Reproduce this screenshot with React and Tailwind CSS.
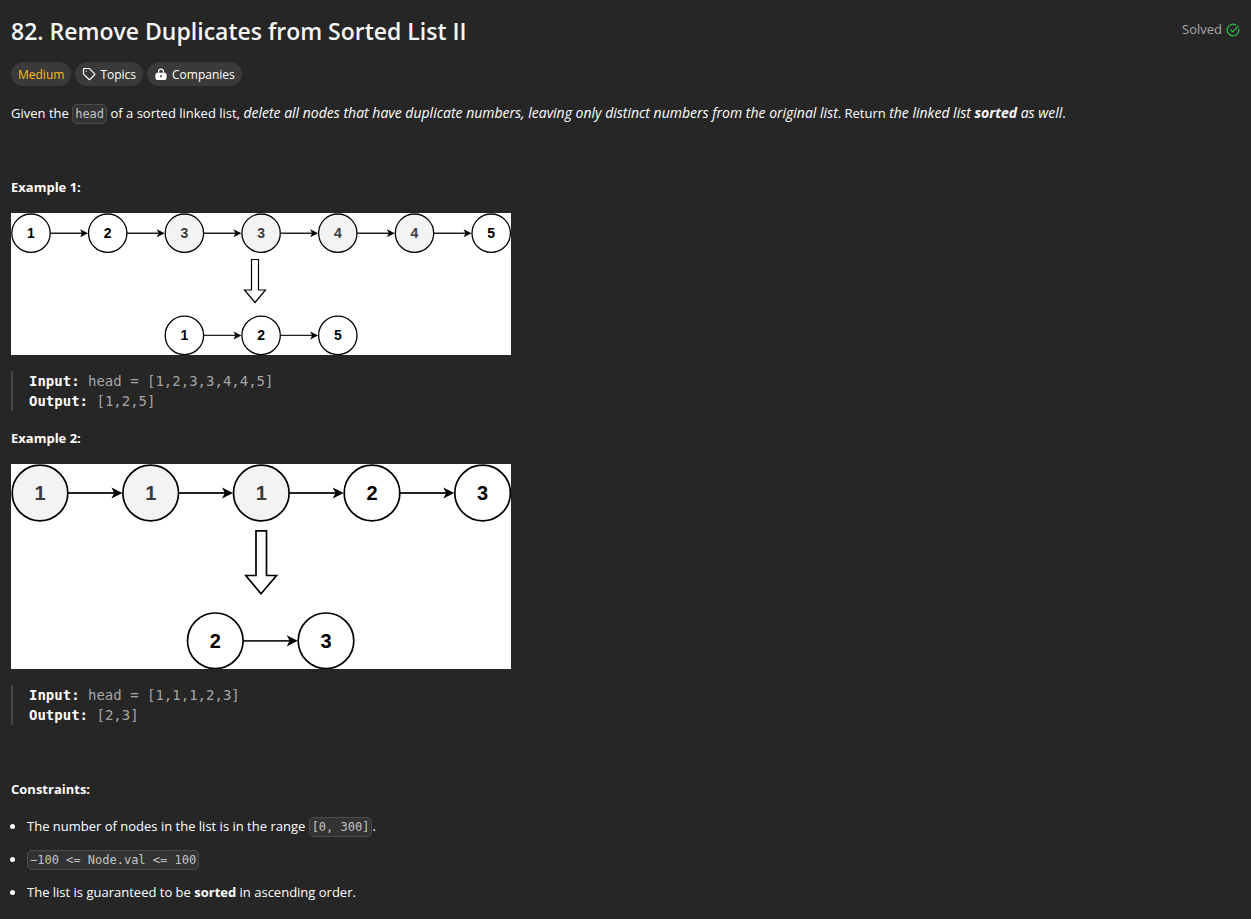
function Node({ x, y, r, label, muted, size }) {
  return (
    <g>
      <circle cx={x} cy={y} r={r} className={muted ? "fill-[#f3f3f3] stroke-black" : "fill-white stroke-black"} strokeWidth={size === "lg" ? 1.7 : 1.3} />
      <text
        x={x}
        y={size === "lg" ? y + 7 : y + 5}
        textAnchor="middle"
        className={`${size === "lg" ? "text-[20px]" : "text-[14px]"} font-bold ${muted ? "fill-[#3a3a3a]" : "fill-black"}`}
      >
        {label}
      </text>
    </g>
  );
}

function Link({ from, to, y, r, size }) {
  const end = to - r - 0.5;
  const h = size === "lg" ? 11 : 8;
  const w = size === "lg" ? 5.6 : 4;
  return (
    <g>
      <path d={`M${from + r} ${y}H${end - h * 0.7}`} stroke="#222" strokeWidth={size === "lg" ? 1.8 : 1.4} />
      <path d={`M${end} ${y}l${-h} ${-w}l${h * 0.26} ${w}l${-h * 0.26} ${w}z`} fill="#000" />
    </g>
  );
}

function Diagram({ title, height, size, r, rows, arrow }) {
  return (
    <svg viewBox={`0 0 500 ${height}`} role="img" aria-label={title} className="mt-[15px] block w-[500px] max-w-full bg-white font-['Liberation_Sans',Arial,sans-serif]">
      {rows.map((row, i) => (
        <g key={i}>
          {row.nodes.slice(1).map((n, j) => (
            <Link key={j} from={row.nodes[j].x} to={n.x} y={row.y} r={r} size={size} />
          ))}
          {row.nodes.map((n, j) => (
            <Node key={j} {...n} y={row.y} r={r} size={size} />
          ))}
        </g>
      ))}
      <path d={arrow} fill="white" stroke="black" strokeWidth={size === "lg" ? 1.7 : 1.2} />
    </svg>
  );
}

const exampleOne = [
  {
    y: 20.2,
    nodes: [
      { x: 20, label: "1" },
      { x: 96.7, label: "2" },
      { x: 173.4, label: "3", muted: true },
      { x: 250.1, label: "3", muted: true },
      { x: 326.8, label: "4", muted: true },
      { x: 403.5, label: "4", muted: true },
      { x: 480.2, label: "5" },
    ],
  },
  {
    y: 122.4,
    nodes: [
      { x: 173.4, label: "1" },
      { x: 250.1, label: "2" },
      { x: 326.8, label: "5" },
    ],
  },
];

const exampleTwo = [
  {
    y: 29,
    nodes: [
      { x: 29, label: "1", muted: true },
      { x: 139.7, label: "1", muted: true },
      { x: 250.3, label: "1", muted: true },
      { x: 361, label: "2" },
      { x: 471.6, label: "3" },
    ],
  },
  {
    y: 176.8,
    nodes: [
      { x: 204.3, label: "2" },
      { x: 315, label: "3" },
    ],
  },
];

function Code({ children }) {
  return (
    <code className="rounded-[5px] border border-[#4b4b4b] bg-[#333333] px-[2px] py-[2px] font-['DejaVu_Sans_Mono',monospace] text-xs text-[#c3c3c3]">
      {children}
    </code>
  );
}

function Sample({ input, output }) {
  return (
    <pre className="mt-4 mb-[17px] border-l-2 border-[#474747] pl-4 font-['DejaVu_Sans_Mono',monospace] text-sm text-[#a5a5a5]">
      <strong className="text-white">Input:</strong> {input}
      {"\n"}
      <strong className="text-white">Output:</strong> {output}
    </pre>
  );
}

function Heading({ children }) {
  return <h2 className="font-bold">{children}</h2>;
}

function Item({ children }) {
  return (
    <li className="flex items-center gap-3">
      <span className="-ml-px size-[5px] shrink-0 rounded-full bg-white" />
      <p>{children}</p>
    </li>
  );
}

const pill = "flex h-6 items-center gap-1 rounded-full bg-[#3a3a3a] px-[7px] pt-[2px] text-xs";

export default function App() {
  return (
    <main className="min-h-screen bg-[#262626] px-[11px] pt-[15px] font-['Open_Sans','Noto_Sans',sans-serif] text-[13px] leading-[21px] text-white">
      <header className="flex items-start justify-between">
        <h1 className="text-[23px] leading-8 font-semibold text-[#f5f5f5]">82. Remove Duplicates from Sorted List II</h1>
        <div className="flex items-center gap-1 pt-1 text-[#a8a8a8]">
          Solved
          <svg viewBox="0 0 14 14" className="size-[14px] fill-none stroke-[#28c244]" strokeWidth="1.2" strokeLinecap="round" strokeLinejoin="round">
            <path d="M9.7 1.9A5.8 5.8 0 1 0 12.7 6" />
            <path d="M4.6 6.8l2.1 2.1 5.4-5.6" />
          </svg>
        </div>
      </header>

      <div className="mt-[15px] flex gap-1">
        <span className={`${pill} text-[#ffb81c]`}>Medium</span>
        <button type="button" className={pill}>
          <svg viewBox="0 0 14 14" className="size-[14px] fill-none stroke-white" strokeWidth="1.2" strokeLinejoin="round">
            <path d="M1.5 1.4a1 1 0 0 1 1-1h4.3a1 1 0 0 1 .7.3l4.9 4.9a1 1 0 0 1 0 1.4l-4.2 4.2a1 1 0 0 1-1.4 0L1.8 6.4a1 1 0 0 1-.3-.7z" />
            <circle cx="4.2" cy="3.2" r=".6" className="fill-white stroke-none" />
          </svg>
          Topics
        </button>
        <button type="button" className={pill}>
          <svg viewBox="0 0 14 14" className="size-[14px] fill-white">
            <path fillRule="evenodd" d="M4 4.7V3.6a3 3 0 0 1 6 0v1.1h.6a2 2 0 0 1 2 2v3.4a2 2 0 0 1-2 2H3.4a2 2 0 0 1-2-2V6.7a2 2 0 0 1 2-2zM5.2 4.7h3.6V3.6a1.8 1.8 0 0 0-3.6 0zM7 7.3a1 1 0 1 0 0 2 1 1 0 0 0 0-2z" />
          </svg>
          Companies
        </button>
      </div>

      <p className="mt-[17px]">
        Given the <Code>head</Code> of a sorted linked list,{" "}
        <em className="text-sm leading-none">delete all nodes that have duplicate numbers, leaving only distinct numbers from the original list</em>. Return{" "}
        <em className="text-sm leading-none">
          the linked list <strong>sorted</strong> as well
        </em>
        .
      </p>
      <p className="my-4">&nbsp;</p>

      <Heading>Example 1:</Heading>
      <Diagram
        title="Linked list 1, 2, 3, 3, 4, 4, 5 becomes 1, 2, 5"
        height={142}
        r={19.2}
        rows={exampleOne}
        arrow="M240.5 46.5h7V77h7L244 89.5 233.5 77h7z"
      />
      <Sample input="head = [1,2,3,3,4,4,5]" output="[1,2,5]" />

      <Heading>Example 2:</Heading>
      <Diagram
        title="Linked list 1, 1, 1, 2, 3 becomes 2, 3"
        height={205}
        size="lg"
        r={27.8}
        rows={exampleTwo}
        arrow="M245 66.8h10.5V111.5h10L250 129.7 234.8 111.5H245z"
      />
      <Sample input="head = [1,1,1,2,3]" output="[2,3]" />

      <p className="my-4">&nbsp;</p>
      <Heading>Constraints:</Heading>
      <ul className="mt-4 flex flex-col gap-3 pb-4">
        <Item>
          The number of nodes in the list is in the range <Code>[0, 300]</Code>.
        </Item>
        <Item>
          <Code>−100 &lt;= Node.val &lt;= 100</Code>
        </Item>
        <Item>
          The list is guaranteed to be <strong>sorted</strong> in ascending order.
        </Item>
      </ul>
    </main>
  );
}
